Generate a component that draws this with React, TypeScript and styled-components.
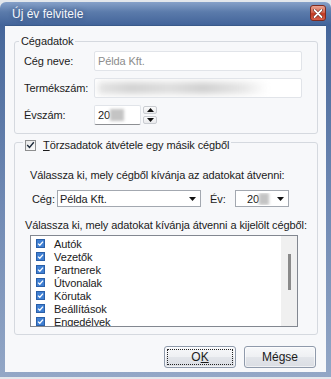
import React from 'react';
import styled, { createGlobalStyle } from 'styled-components';

const GlobalStyle = createGlobalStyle`
  html, body {
    margin: 0;
    padding: 0;
  }
  body {
    background: #e3e7ec;
    font-family: "Liberation Sans", Arial, sans-serif;
    font-size: 11px;
    letter-spacing: -0.1px;
    color: #1b1b1b;
  }
`;

const Page = styled.div`
  width: 331px;
  height: 379px;
  padding-top: 2px;
  box-sizing: border-box;
  overflow: hidden;
`;

const Window = styled.div`
  height: 375px;
  display: flex;
  flex-direction: column;
  padding: 0 5px 5px;
  box-sizing: border-box;
  border-radius: 6px 6px 0 0;
  background: linear-gradient(
    180deg,
    #86a1c9 0px,
    #5b7bab 10px,
    #43649a 23px,
    #4a6a9c 40px,
    #6f89b3 200px,
    #93a7c6 100%
  );
`;

const TitleBar = styled.div`
  height: 23px;
  display: flex;
  align-items: center;
  justify-content: space-between;
  padding-left: 7px;
`;

const Title = styled.span`
  font-size: 12px;
  letter-spacing: 0;
  color: #f4f7fb;
  text-shadow: 0 0 4px rgba(20, 40, 80, 0.5);
`;

const CloseButton = styled.div`
  width: 16px;
  height: 16px;
  box-sizing: border-box;
  border: 1px solid #7e2a1e;
  border-radius: 3px;
  background: linear-gradient(180deg, #e9a493 0%, #d5664f 45%, #c23a22 55%, #d8604a 100%);
  display: flex;
  align-items: center;
  justify-content: center;
  margin-bottom: 1px;
`;

const Content = styled.div`
  flex: 1;
  display: flex;
  flex-direction: column;
  padding: 8px 8px 0 9px;
  background: #f7f8fa;
  border-top: 1px solid #3a5a8a;
`;

const Group = styled.fieldset<{ $top?: number }>`
  margin: ${p => p.$top ?? 0}px 0 0;
  padding: 0;
  border: 1px solid #d5d9df;
  border-radius: 3px;
  min-width: 0;
`;

const Legend = styled.legend<{ $indent: number; $drop?: number }>`
  margin-left: ${p => p.$indent}px;
  padding: ${p => p.$drop ?? 0}px 2px 0;
  line-height: 14px;
  display: flex;
  align-items: center;
  gap: 7px;
`;

const CompanyBody = styled.div`
  display: flex;
  flex-direction: column;
  gap: 7px;
  padding: 3px 15px 8px 9px;
`;

const FieldRow = styled.div`
  display: grid;
  grid-template-columns: 70px 208px;
  align-items: center;
`;

const Label = styled.span`
  white-space: nowrap;
`;

const TextBox = styled.div<{ $width?: number; $strong?: boolean }>`
  width: ${p => (p.$width ? `${p.$width}px` : '100%')};
  height: 20px;
  box-sizing: border-box;
  background: #fff;
  border: 1px solid #e1e4e9;
  border-bottom-color: ${p => (p.$strong ? '#8d8f93' : '#e1e4e9')};
  border-radius: 2px;
  display: flex;
  align-items: center;
  padding-left: 3px;
  overflow: hidden;
`;

const Placeholder = styled.span`
  color: #8c8c8c;
`;

const Redacted = styled.span<{ $w: number; $light?: boolean }>`
  display: inline-block;
  width: ${p => p.$w}px;
  height: 12px;
  background: ${p =>
    p.$light
      ? 'linear-gradient(90deg, #e4e4e4, #d2d2d2 20%, #dedede 42%, #d0d0d0 62%, #e6e6e6 85%, rgba(255,255,255,0))'
      : '#c4c4c4'};
  filter: blur(${p => (p.$light ? 3 : 1.5)}px);
`;

const YearRow = styled.div`
  display: flex;
  align-items: center;
  gap: 2px;
`;

const Spinner = styled.div`
  display: flex;
  flex-direction: column;
  gap: 2px;
`;

const SpinButton = styled.div`
  width: 14px;
  height: 8px;
  box-sizing: border-box;
  border: 1px solid #c9ccd1;
  border-radius: 2px;
  background: linear-gradient(180deg, #fbfbfb, #e9eaec);
  display: flex;
  align-items: center;
  justify-content: center;
`;

const CheckBox = styled.div`
  width: 11px;
  height: 11px;
  box-sizing: border-box;
  border: 1px solid #8e8f8f;
  background: linear-gradient(135deg, #e8e8e8, #fbfbfb);
  display: flex;
  align-items: center;
  justify-content: center;
`;

const Underlined = styled.span`
  text-decoration: underline;
`;

const ImportBody = styled.div`
  display: flex;
  flex-direction: column;
  padding: 16px 0 7px;
`;

const Hint = styled.div<{ $indent: number; $top?: number }>`
  margin: ${p => p.$top ?? 0}px 0 0 ${p => p.$indent}px;
  line-height: 14px;
  white-space: nowrap;
`;

const PickRow = styled.div`
  display: flex;
  align-items: center;
  margin: 8px 0 0 17px;
`;

const PickLabel = styled.span<{ $gap?: number }>`
  width: 25px;
  margin-left: ${p => p.$gap ?? 0}px;
`;

const Combo = styled.div<{ $width: number; $pad?: number }>`
  width: ${p => p.$width}px;
  height: 17px;
  box-sizing: border-box;
  border: 1px solid #a3a8b0;
  background: #fff;
  display: flex;
  align-items: center;
  padding-left: ${p => p.$pad ?? 2}px;
`;

const ComboText = styled.span`
  flex: 1;
  display: flex;
  align-items: center;
  overflow: hidden;
  white-space: nowrap;
`;

const ComboArrow = styled.span`
  width: 16px;
  display: flex;
  justify-content: center;
`;

const ListBox = styled.div`
  margin: 3px 0 0 15px;
  width: 268px;
  height: 92px;
  box-sizing: border-box;
  border: 1px solid #828790;
  background: #fff;
  display: flex;
`;

const ListItems = styled.div`
  flex: 1;
  overflow: hidden;
  padding: 1px 0 0 5px;
`;

const ListItem = styled.div`
  height: 13px;
  display: flex;
  align-items: center;
  gap: 9px;
  white-space: nowrap;
`;

const ScrollTrack = styled.div`
  width: 16px;
  background: #f0f0f0;
  display: flex;
  justify-content: center;
  padding-top: 18px;
  box-sizing: border-box;
`;

const ScrollThumb = styled.div`
  width: 3px;
  height: 36px;
  background: #8a8a8a;
  margin-left: 1px;
`;

const ButtonRow = styled.div`
  display: flex;
  justify-content: flex-end;
  gap: 8px;
  margin: 11px 2px 0 0;
`;

const Button = styled.button`
  width: 72px;
  height: 22px;
  padding: 0;
  border: 1px solid #8f9aab;
  border-radius: 3px;
  background: linear-gradient(180deg, #f7f8fa 0%, #eef0f3 50%, #e2e5ea 51%, #dadde3 100%);
  font: inherit;
  font-size: 12px;
  color: #1b1b1b;
  display: flex;
  align-items: center;
  justify-content: center;
  box-sizing: border-box;
  box-shadow: inset 0 0 0 1px rgba(255, 255, 255, 0.6);
`;

const FocusRing = styled.span`
  width: 66px;
  height: 16px;
  box-sizing: border-box;
  border: 1px dotted #222;
  display: flex;
  align-items: center;
  justify-content: center;
`;

const items = ['Autók', 'Vezetők', 'Partnerek', 'Útvonalak', 'Körutak', 'Beállítások', 'Engedélyek'];

const Arrow = ({ up }: { up?: boolean }) => (
  <svg width="7" height="4" viewBox="0 0 7 4">
    <path d={up ? 'M0 4 L3.5 0 L7 4 Z' : 'M0 0 L7 0 L3.5 4 Z'} fill="#111" />
  </svg>
);

const BlueCheck = () => (
  <svg width="9" height="9" viewBox="0 0 9 9">
    <rect x="0.5" y="0.5" width="8" height="8" fill="#3f7fd2" stroke="#2a5fa8" />
    <path d="M2 4.6 L3.8 6.3 L7 2.6" fill="none" stroke="#fff" strokeWidth="1.3" />
  </svg>
);

const App: React.FC = () => (
  <Page>
    <GlobalStyle />
    <Window>
      <TitleBar>
        <Title>Új év felvitele</Title>
        <CloseButton>
          <svg width="10" height="9" viewBox="0 0 10 9">
            <path d="M1.5 1 L8.5 8 M8.5 1 L1.5 8" stroke="#5a1a10" strokeWidth="3" strokeLinecap="round" />
            <path d="M1.5 1 L8.5 8 M8.5 1 L1.5 8" stroke="#fff" strokeWidth="1.8" strokeLinecap="round" />
          </svg>
        </CloseButton>
      </TitleBar>
      <Content>
        <Group>
          <Legend $indent={4}>Cégadatok</Legend>
          <CompanyBody>
            <FieldRow>
              <Label>Cég neve:</Label>
              <TextBox>
                <Placeholder>Példa Kft.</Placeholder>
              </TextBox>
            </FieldRow>
            <FieldRow>
              <Label>Termékszám:</Label>
              <TextBox>
                <Redacted $w={170} $light />
              </TextBox>
            </FieldRow>
            <FieldRow>
              <Label>Évszám:</Label>
              <YearRow>
                <TextBox $width={47} $strong>
                  20
                  <Redacted $w={14} />
                </TextBox>
                <Spinner>
                  <SpinButton>
                    <Arrow up />
                  </SpinButton>
                  <SpinButton>
                    <Arrow />
                  </SpinButton>
                </Spinner>
              </YearRow>
            </FieldRow>
          </CompanyBody>
        </Group>

        <Group $top={-2}>
          <Legend $indent={8} $drop={6}>
            <CheckBox>
              <svg width="9" height="8" viewBox="0 0 9 8">
                <path d="M1.2 4 L3.5 6.4 L7.8 1.3" fill="none" stroke="#1c2a3a" strokeWidth="1.4" />
              </svg>
            </CheckBox>
            <span>
              <Underlined>T</Underlined>örzsadatok átvétele egy másik cégből
            </span>
          </Legend>
          <ImportBody>
            <Hint $indent={15}>Válassza ki, mely cégből kívánja az adatokat átvenni:</Hint>
            <PickRow>
              <PickLabel>Cég:</PickLabel>
              <Combo $width={144}>
                <ComboText>Példa Kft.</ComboText>
                <ComboArrow>
                  <Arrow />
                </ComboArrow>
              </Combo>
              <PickLabel $gap={9}>Év:</PickLabel>
              <Combo $width={54} $pad={11}>
                <ComboText>
                  20
                  <Redacted $w={10} />
                </ComboText>
                <ComboArrow>
                  <Arrow />
                </ComboArrow>
              </Combo>
            </PickRow>
            <Hint $indent={10} $top={11}>
              Válassza ki, mely adatokat kívánja átvenni a kijelölt cégből:
            </Hint>
            <ListBox>
              <ListItems>
                {items.map(item => (
                  <ListItem key={item}>
                    <BlueCheck />
                    {item}
                  </ListItem>
                ))}
              </ListItems>
              <ScrollTrack>
                <ScrollThumb />
              </ScrollTrack>
            </ListBox>
          </ImportBody>
        </Group>

        <ButtonRow>
          <Button>
            <FocusRing>
              O<Underlined>K</Underlined>
            </FocusRing>
          </Button>
          <Button>Mégse</Button>
        </ButtonRow>
      </Content>
    </Window>
  </Page>
);

export default App;
